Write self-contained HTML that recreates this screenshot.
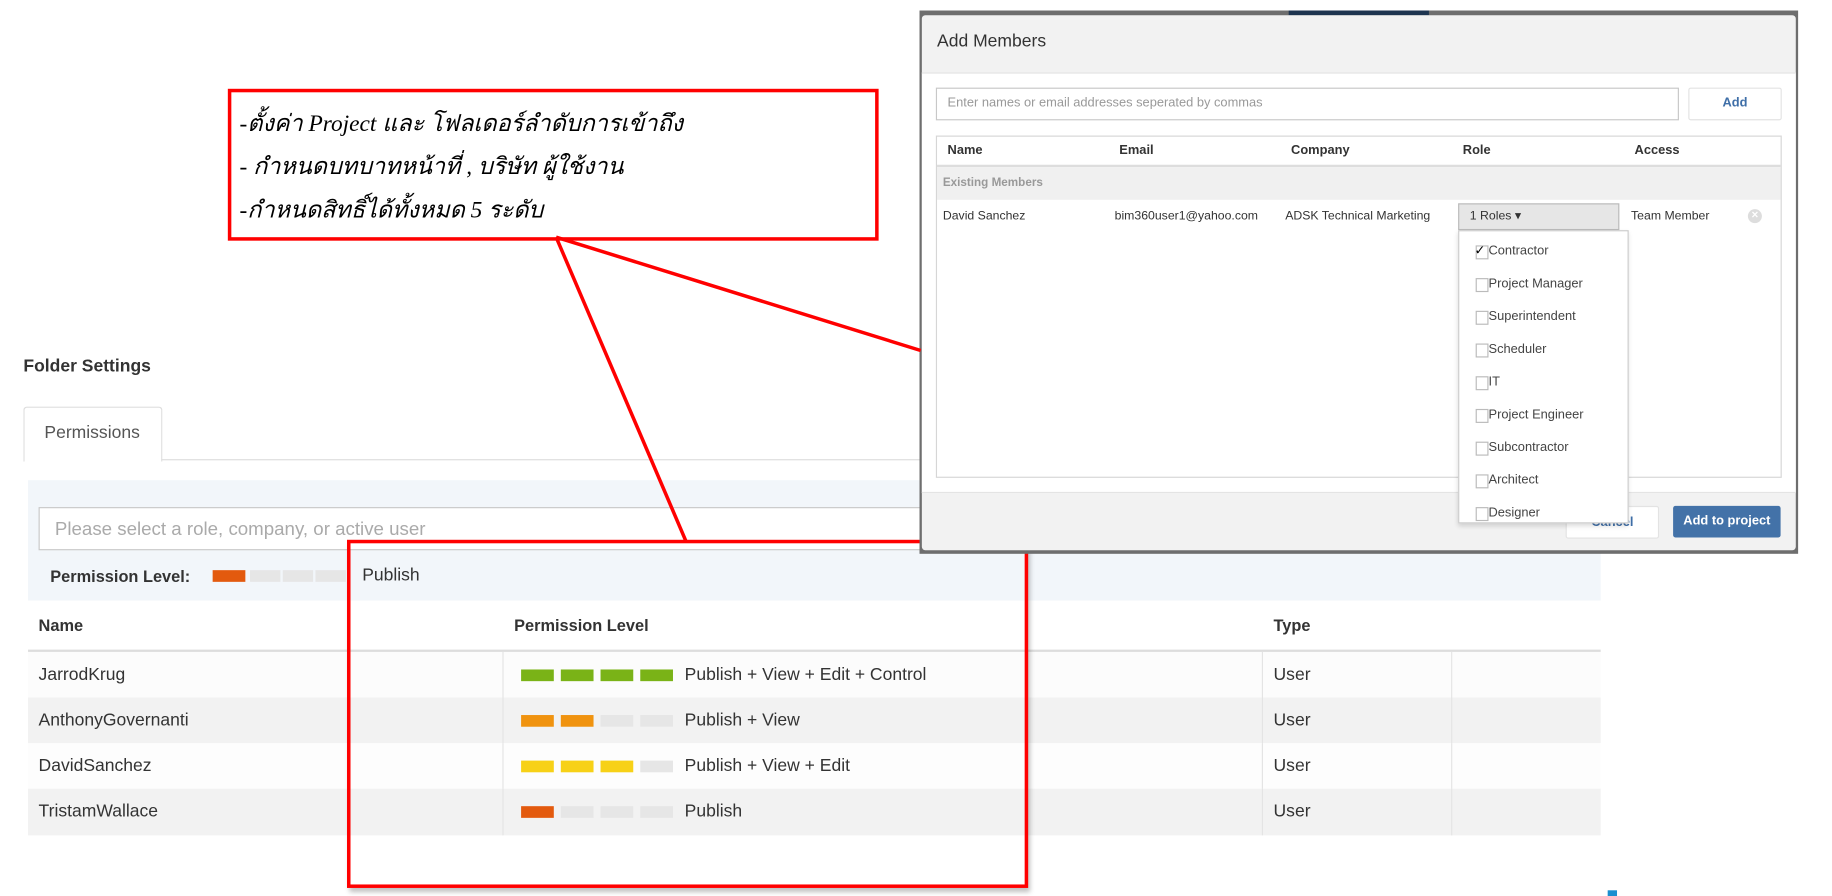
<!DOCTYPE html>
<html><head><meta charset="utf-8">
<style>
html,body{margin:0;padding:0;background:#fff;overflow:hidden;width:1832px;height:896px}
#s{position:absolute;left:0;top:0;width:1568px;height:767px;transform:scale(1.16837);transform-origin:0 0;font-family:"Liberation Sans",sans-serif;color:#333}
.a{position:absolute}
.bar{position:absolute;width:28px;height:10px;top:15px}
.row{position:absolute;left:24px;width:1346px;height:39px;font-size:15px}
.row .n{position:absolute;left:9px;top:11px}
.row .t{position:absolute;left:562px;top:11px}
.row .u{position:absolute;left:1066px;top:11px}
.vl{position:absolute;top:0;bottom:0;width:1px;background:#e4e4e4}
.mh{position:absolute;top:6px;font-size:11px;font-weight:bold;color:#333}
.it{position:absolute;left:25px;font-size:11px;color:#444}
.cb{position:absolute;left:-11px;top:1px;width:9px;height:10px;border:1px solid #bbb;background:#fff}
</style></head><body><div id="s">
<div class="a" style="left:20px;top:305px;font-size:15px;font-weight:bold;color:#333">Folder Settings</div>
<div class="a" style="left:20px;top:348px;width:117px;height:46px;border:1px solid #ddd;border-bottom:none;border-radius:3px 3px 0 0;background:#fff"></div>
<div class="a" style="left:38px;top:362px;font-size:15px;color:#555">Permissions</div>
<div class="a" style="left:138px;top:393px;width:660px;height:1px;background:#ddd"></div>
<div class="a" style="left:24px;top:411px;width:1346px;height:103px;background:#f2f6fa"></div>
<div class="a" style="left:33px;top:434px;width:760px;height:35px;border:1px solid #c8c8c8;background:#fff"></div>
<div class="a" style="left:47px;top:445px;font-size:16px;color:#aaa">Please select a role, company, or active user</div>
<div class="a" style="left:43px;top:485px;font-size:14px;font-weight:bold;color:#333">Permission Level:</div>
<div class="a" style="left:182px;top:488px;width:28px;height:10px;background:#e35a0e"></div>
<div class="a" style="left:214px;top:488px;width:26px;height:10px;background:#e6e6e6"></div>
<div class="a" style="left:242px;top:488px;width:26px;height:10px;background:#e6e6e6"></div>
<div class="a" style="left:270px;top:488px;width:26px;height:10px;background:#e6e6e6"></div>
<div class="a" style="left:310px;top:484px;font-size:15px;color:#333">Publish</div>
<div class="a" style="left:33px;top:527px;font-size:14px;font-weight:bold">Name</div>
<div class="a" style="left:440px;top:527px;font-size:14px;font-weight:bold">Permission Level</div>
<div class="a" style="left:1090px;top:527px;font-size:14px;font-weight:bold">Type</div>
<div class="a" style="left:24px;top:556px;width:1346px;height:2px;background:#ddd"></div>
<div class="row" style="top:558px;background:#fcfcfc"><div class="vl" style="left:406px"></div><div class="vl" style="left:1056px"></div><div class="vl" style="left:1218px"></div><div class="n">JarrodKrug</div>
<div class="bar" style="left:422px;background:#7ab317"></div><div class="bar" style="left:456px;background:#7ab317"></div><div class="bar" style="left:490px;background:#7ab317"></div><div class="bar" style="left:524px;background:#7ab317"></div><div class="t">Publish + View + Edit + Control</div><div class="u">User</div></div>
<div class="row" style="top:597px;background:#f2f2f2"><div class="vl" style="left:406px"></div><div class="vl" style="left:1056px"></div><div class="vl" style="left:1218px"></div><div class="n">AnthonyGovernanti</div>
<div class="bar" style="left:422px;background:#f0930f"></div><div class="bar" style="left:456px;background:#f0930f"></div><div class="bar" style="left:490px;background:#e6e6e6"></div><div class="bar" style="left:524px;background:#e6e6e6"></div><div class="t">Publish + View</div><div class="u">User</div></div>
<div class="row" style="top:636px;background:#fdfdfd"><div class="vl" style="left:406px"></div><div class="vl" style="left:1056px"></div><div class="vl" style="left:1218px"></div><div class="n">DavidSanchez</div>
<div class="bar" style="left:422px;background:#f7d117"></div><div class="bar" style="left:456px;background:#f7d117"></div><div class="bar" style="left:490px;background:#f7d117"></div><div class="bar" style="left:524px;background:#e6e6e6"></div><div class="t">Publish + View + Edit</div><div class="u">User</div></div>
<div class="row" style="top:675px;height:40px;background:#f2f2f2"><div class="vl" style="left:406px"></div><div class="vl" style="left:1056px"></div><div class="vl" style="left:1218px"></div><div class="n">TristamWallace</div>
<div class="bar" style="left:422px;background:#e35a0e"></div><div class="bar" style="left:456px;background:#e6e6e6"></div><div class="bar" style="left:490px;background:#e6e6e6"></div><div class="bar" style="left:524px;background:#e6e6e6"></div><div class="t">Publish</div><div class="u">User</div></div>

<div class="a" style="left:297px;top:462px;width:577px;height:292px;border:3px solid #f00;box-shadow:2px 4px 4px rgba(0,0,0,.25)"></div>

<div class="a" style="left:787px;top:9px;width:752px;height:465px;background:#6e6e6e"></div>
<div class="a" style="left:1103px;top:9px;width:120px;height:4px;background:#1e3550"></div>
<div class="a" style="left:789px;top:13px;width:748px;height:458px;background:#f2f2f2;border-radius:3px"></div>
<div class="a" style="left:802px;top:27px;font-size:15px;color:#333">Add Members</div>
<div class="a" style="left:789px;top:62px;width:748px;height:358px;background:#fff;border-top:1px solid #e4e4e4;border-bottom:1px solid #e4e4e4"></div>
<div class="a" style="left:801px;top:75px;width:634px;height:26px;border:1px solid #c8c8c8;background:#fff"></div>
<div class="a" style="left:811px;top:82px;font-size:11px;color:#999">Enter names or email addresses seperated by commas</div>
<div class="a" style="left:1445px;top:75px;width:78px;height:26px;border:1px solid #e3e3e3;border-radius:2px;background:#fff;text-align:center;line-height:24px;font-size:11px;font-weight:bold;color:#3f6fa8">Add</div>
<div class="a" style="left:801px;top:116px;width:722px;height:291px;border:1px solid #d6d6d6;background:#fff">
 <div class="a" style="left:0;top:0;width:722px;height:24px;border-bottom:2px solid #ddd"></div>
 <div class="mh" style="left:9px">Name</div><div class="mh" style="left:156px">Email</div><div class="mh" style="left:303px">Company</div><div class="mh" style="left:450px">Role</div><div class="mh" style="left:597px">Access</div>
 <div class="a" style="left:0;top:26px;width:722px;height:28px;background:#f0f0f0"></div>
 <div class="a" style="left:5px;top:34px;font-size:10px;font-weight:bold;color:#999">Existing Members</div>
 <div class="a" style="left:5px;top:62px;font-size:10.5px;color:#333">David Sanchez</div>
 <div class="a" style="left:152px;top:62px;font-size:10.5px;color:#333">bim360user1@yahoo.com</div>
 <div class="a" style="left:298px;top:62px;font-size:10.5px;color:#333">ADSK Technical Marketing</div>
 <div class="a" style="left:446px;top:57px;width:136px;height:21px;background:#e6e6e6;border:1px solid #bbb"></div>
 <div class="a" style="left:456px;top:62px;font-size:10.5px;color:#333">1 Roles ▾</div>
 <div class="a" style="left:594px;top:62px;font-size:10.5px;color:#333">Team Member</div>
 <div class="a" style="left:694px;top:62px;width:12px;height:12px;border-radius:50%;background:#ddd;color:#fff;font-size:10px;line-height:12px;text-align:center;font-weight:bold">×</div>
</div>
<div class="a" style="left:1340px;top:433px;width:78px;height:26px;border:1px solid #e3e3e3;border-radius:2px;background:#fff;text-align:center;line-height:26px;font-size:11px;font-weight:bold;color:#3f6fa8">Cancel</div>
<div class="a" style="left:1432px;top:433px;width:92px;height:27px;border-radius:2px;background:#4372a8;text-align:center;line-height:27px;font-size:11px;font-weight:bold;color:#fff">Add to project</div>
<div class="a" style="left:1248px;top:197px;width:144px;height:249px;background:#fff;border:1px solid #ccc;box-shadow:0 2px 4px rgba(0,0,0,.15);overflow:hidden">
 <div class="it" style="top:11px"><div class="cb"></div><span style="position:absolute;left:-12px;top:-1px;font-size:11px;color:#000">✓</span>Contractor</div>
 <div class="it" style="top:39px"><div class="cb"></div>Project Manager</div>
 <div class="it" style="top:67px"><div class="cb"></div>Superintendent</div>
 <div class="it" style="top:95px"><div class="cb"></div>Scheduler</div>
 <div class="it" style="top:123px"><div class="cb"></div>IT</div>
 <div class="it" style="top:151px"><div class="cb"></div>Project Engineer</div>
 <div class="it" style="top:179px"><div class="cb"></div>Subcontractor</div>
 <div class="it" style="top:207px"><div class="cb"></div>Architect</div>
 <div class="it" style="top:235px"><div class="cb"></div>Designer</div>
</div>

<div class="a" style="left:195px;top:76px;width:551px;height:124px;border:3px solid #f00;background:#fff"></div>
<div class="a" style="left:205px;top:88px;font-family:'Liberation Serif',serif;font-style:italic;font-size:20px;line-height:37px;color:#000;white-space:nowrap">-ตั้งค่า Project และ โฟลเดอร์ลำดับการเข้าถึง<br>- กำหนดบทบาทหน้าที่ , บริษัท ผู้ใช้งาน<br>-กำหนดสิทธิ์ได้ทั้งหมด 5 ระดับ</div>
<svg class="a" style="left:0;top:0" width="1568" height="767"><line x1="476" y1="203" x2="587" y2="463" stroke="#f00" stroke-width="3"/><line x1="476" y1="203" x2="788" y2="300" stroke="#f00" stroke-width="3"/></svg>
<div class="a" style="left:1376px;top:762px;width:8px;height:5px;background:#1a8fd0"></div>
</div></body></html>
